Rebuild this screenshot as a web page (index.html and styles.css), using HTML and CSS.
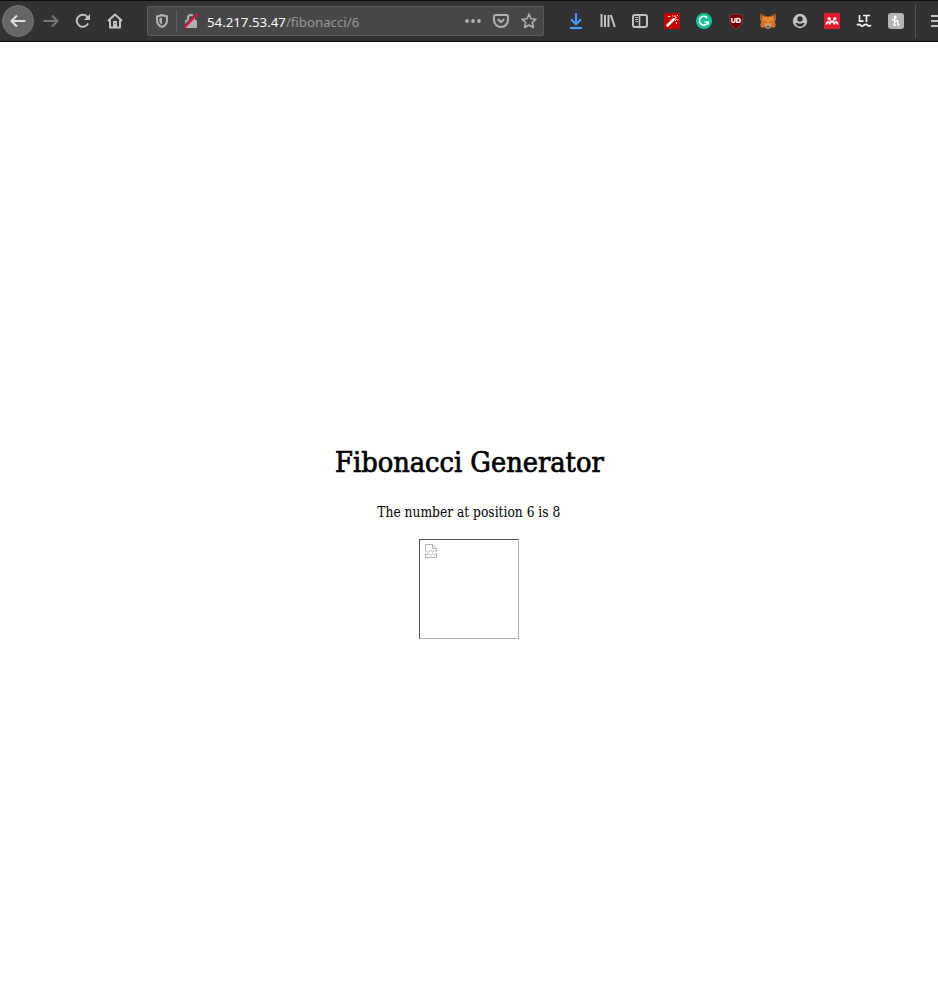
FILE: index.html
```html
<!DOCTYPE html>
<html lang="en">
<head>
<meta charset="utf-8">
<title>Fibonacci Generator</title>
<link rel="stylesheet" href="styles.css">
</head>
<body>
<header class="toolbar">
  <nav class="navigation">
    <span class="back"><svg viewBox="0 0 16 16"><path class="line" d="M15.500 8H1.500M7 2.500 1.500 8 7 13.500"/></svg></span>
    <span class="slot forward"><svg viewBox="0 0 16 16"><path class="line" d="M.5 8h14M9 2.500 14.500 8 9 13.500"/></svg></span>
    <span class="slot"><svg viewBox="0 0 16 16"><path class="line" d="M13.200 10.400A6 6 0 1 1 12.600 4.200"/><path d="M15 1v6H9z"/></svg></span>
    <span class="slot"><svg viewBox="0 0 16 16"><path class="line" d="M1 8 8 1.400 15 8M3 7v7.500h10V7"/><path d="M6 8h4v6H6z"/><path fill="#323234" d="M7.500 10h1v1h-1z"/></svg></span>
  </nav>
  <div class="urlbar">
    <svg class="shield" viewBox="0 0 16 16"><path class="line" d="M8 2c2 1 3.500 1.200 5 1.200V7c0 3.600-1.700 5.800-5 7-3.300-1.200-5-3.400-5-7V3.200C4.500 3.200 6 3 8 2z"/><path d="M8 4.500v7C6 10.500 5.300 9 5.300 7V5.200C6.200 5.100 7 5 8 4.500z"/></svg>
    <i class="divider"></i>
    <svg class="lock" viewBox="0 0 16 16"><path class="line" d="M5 8V5a3 3 0 0 1 6 0v3"/><rect x="2" y="7" width="12" height="8" rx="1"/><path d="M.5 14 13 1" stroke="#4a4a4c" stroke-width="2"/><path d="M1.500 14.700 14.500 1.200" stroke="#ff0039" stroke-width="1.900"/></svg>
    <span class="address">54.217.53.47<span class="path">/fibonacci/6</span></span>
    <span class="actions">
      <svg viewBox="0 0 16 16"><circle cx="2" cy="8" r="1.900"/><circle cx="8" cy="8" r="1.900"/><circle cx="14" cy="8" r="1.900"/></svg>
      <svg viewBox="0 0 16 16"><path class="line" d="M2.500 2h11Q15 2 15 3.500V7A7 7 0 0 1 1 7V3.500Q1 2 2.500 2z"/><path class="line" d="M4.800 6 8 9.200 11.200 6"/></svg>
      <svg viewBox="0 0 16 16"><path class="line thin" d="m8 1.200 2 4.500 5 .5-3.700 3.300 1.100 5L8 12l-4.400 2.500 1.100-5L1 6.200l5-.5z"/></svg>
    </span>
  </div>
  <div class="extensions">
    <span class="slot download"><svg viewBox="0 0 16 16"><path class="line" d="M8 0v11M3 6.200l5 5 5-5M2 15h12"/></svg></span>
    <span class="slot"><svg viewBox="0 0 16 16"><path class="line" d="M1.500 1v13M5 2v12M8.500 2v12M10.800 2l4 12"/></svg></span>
    <span class="slot"><svg viewBox="0 0 16 16"><rect class="line" x="1" y="2" width="14" height="12" rx="2"/><path class="line thin" d="M7.500 2v12"/><path stroke="#c2c2c3" d="M3 4.500h3M3 6.500h3M3.500 8.500H6"/></svg></span>
    <span class="slot"><svg viewBox="0 0 16 16"><path fill="#c40000" d="M0 0h16v16H0z"/><path stroke="#fff" stroke-width="2.600" stroke-linecap="round" d="m3.500 12.500 6-6"/><path fill="none" stroke="#ffe0dc" d="m9 5 3 3M4 3.500h2.500M8 2.500l1.500 1M11 2v2l2 .5M10.500 5.500 14 7M12.500 9v2M13 2.500h1"/></svg></span>
    <span class="slot"><svg viewBox="0 0 16 16"><circle cx="8" cy="8" r="8" fill="#15c39a"/><path fill="none" stroke="#fff" stroke-width="1.600" d="M11.300 5A4.400 4.400 0 1 0 12 9H8.500M12.300 8.300v3.200"/></svg></span>
    <span class="slot"><svg viewBox="0 0 16 16"><path fill="#800000" stroke="#a3a0a0" stroke-width=".3" d="M8 .3C10 1.600 12.500 2 14.500 2v5c0 4-2.500 6.800-6.500 8.700C4 13.800 1.500 11 1.500 7V2C3.500 2 6 1.600 8 .3z"/><path fill="none" stroke="#fff" stroke-width="1.400" d="M3.800 5v3q0 1.300 1.300 1.300h.6Q7 9.300 7 8V5M8.800 5.500v3.800h1.400q2 0 2-1.900t-2-1.900z"/></svg></span>
    <span class="slot"><svg viewBox="0 0 16 16"><path fill="#d87128" d="m.6.500 5.600 3h3.600l5.600-3 .5 4.500-1 4 .8 3-1.200 3-3.500-1-1.500 1.500h-3L5 14l-3.500 1-1.200-3 .8-3-1-4z"/><path fill="#9a4f20" d="M.6.500 5.500 3.500 4.500 5 1 5zM15.400.500 10.500 3.500 11.500 5l3.500 0z"/><path fill="#e88530" d="m2 2.800 4.500 1.500h3L14 2.800 13 7l-2 5H5L3 7z"/><path fill="#c0ad9e" d="m4.500 12 2-.5h3l2 .5-1.500 3.300H6z"/><path fill="#4b3d3a" d="m4 8.200 2.500 1H4.300zM12 8.200l-2.500 1h2.200zM6.500 12.800h3l.3 1.400H6.200z"/></svg></span>
    <span class="slot"><svg viewBox="0 0 16 16"><circle cx="8" cy="8" r="7.200"/><circle cx="8" cy="6" r="2.700" fill="#323234"/><path fill="#323234" d="M3.500 10h9Q11.500 13.500 8 13.500T3.500 10z"/><path d="M5.500 10Q8 11.600 10.500 10l-.4-.8H5.900z"/></svg></span>
    <span class="slot"><svg viewBox="0 0 16 16"><path fill="#e2182d" d="M0 0h16v16H0z"/><circle cx="5.200" cy="5.600" r="1.600" fill="#fff"/><circle cx="10.800" cy="5.600" r="1.600" fill="#fff"/><path fill="none" stroke="#fff" stroke-width="1.900" d="M2.300 11.500q.2-2.300 2.200-3M13.700 11.500q-.2-2.300-2.200-3M5.700 11.500V9M10.300 11.500V9M5.800 7.500 8 9l2.200-1.500"/></svg></span>
    <span class="slot"><svg viewBox="0 0 16 16"><path fill="none" stroke="#f2f2f2" stroke-width="1.700" d="M3.500 2v6.200h4M7 2.500h7M10.500 2v7"/><path fill="none" stroke="#f2f2f2" stroke-width="1.800" d="M1 12.200q1.800-1.800 3.500 0t3.500 0 3.500 0 3.500 0"/></svg></span>
    <span class="slot"><svg viewBox="0 0 16 16"><rect width="16" height="16" rx="3" fill="#b4b4b5"/><path fill="none" stroke="#fff" stroke-width="1.300" d="M4 7q4-1 4-3.300Q6 2 6.500 5.500V12M6.500 9q3.300-3 3.300 0v3h1.700M5 12.200h3"/></svg></span>
    <i class="separator"></i>
    <svg class="menu" viewBox="0 0 16 16"><path class="line" d="M1 3h14M1 8h14M1 13h14"/></svg>
  </div>
</header>
<main class="content">
  <h1>Fibonacci Generator</h1>
  <p>The number at position 6 is 8</p>
  <div class="missing-image">
    <svg viewBox="0 0 14 16"><path d="M1.500 7.500v-6h7l4 4v3M8.500 1.500v4h4M1.500 7.500l2.500 2 2.500-2.500 2 2 2-1.500 2 1M1.500 10.500v4h11v-4l-2 2-2-2-2 2-2-2-1.500 1.500z"/></svg>
  </div>
</main>
</body>
</html>
```
FILE: styles.css
```css
* { box-sizing: border-box; }
html, body { height: 100%; }
body { display: flex; flex-direction: column; margin: 0; overflow: hidden; background: #fff; color: #000; }
svg { display: block; width: 16px; height: 16px; flex: none; fill: #c2c2c3; }
.line { fill: none; stroke: #c2c2c3; stroke-width: 2; stroke-linejoin: round; }
.thin { stroke-width: 1.6; }
.toolbar { display: flex; align-items: center; height: 42px; flex: none; overflow: hidden; background: #323234; border-top: 1px solid #0c0c0d; border-bottom: 1px solid #0c0c0d; }
.navigation { display: flex; align-items: center; width: 147px; flex: none; padding-left: 2px; }
.back { display: grid; place-items: center; width: 32px; height: 32px; border: 1px solid #777778; border-radius: 50%; background: #666667; margin-right: 1px; }
.back .line { stroke: #dededf; }
.slot { display: grid; place-items: center; width: 32px; height: 32px; flex: none; }
.forward .line { stroke: #77777a; }
.urlbar { display: flex; align-items: center; width: 397px; height: 30px; flex: none; padding: 0 6px; background: #474749; border: 1px solid #5b5b5d; border-radius: 2px; }
.urlbar svg { fill: #b0b0b1; }
.urlbar .line { stroke: #b0b0b1; }
.shield { margin-right: 6px; }
.divider { width: 1px; height: 22px; background: #626266; }
.lock { margin-left: 6px; }
.address { margin-left: 8px; font: 13.25px/20px "Noto Sans", sans-serif; color: #f9f9fa; white-space: nowrap; position: relative; top: 1px; }
.path { color: #98989a; }
.actions { display: flex; gap: 12px; margin-left: auto; }
.extensions { display: flex; align-items: center; flex: none; margin-left: 16px; }
.download .line { stroke: #45a1ff; }
.separator { width: 1px; height: 34px; margin-left: 3px; background: #555557; }
.menu { margin-left: 14px; }
.content { display: flex; flex: 1; flex-direction: column; align-items: center; padding-top: 401px; font-family: "DejaVu Serif Condensed", "DejaVu Serif", serif; }
h1 { margin: 0; font-size: 28px; font-weight: 400; line-height: 40px; white-space: nowrap; -webkit-text-stroke: .7px #000; transform: scaleX(1.022); }
p { margin: 19px 0 0; font-size: 14px; line-height: 20px; white-space: nowrap; transform: scaleX(.975); }
.missing-image { width: 100px; height: 100px; margin-top: 17px; padding: 3px 4px; border: 1px solid; border-color: #505050 #b0b0b0 #b0b0b0 #505050; }
.missing-image svg { width: 14px; height: 16px; fill: none; stroke: #b5b5b5; stroke-width: 1; }
```
